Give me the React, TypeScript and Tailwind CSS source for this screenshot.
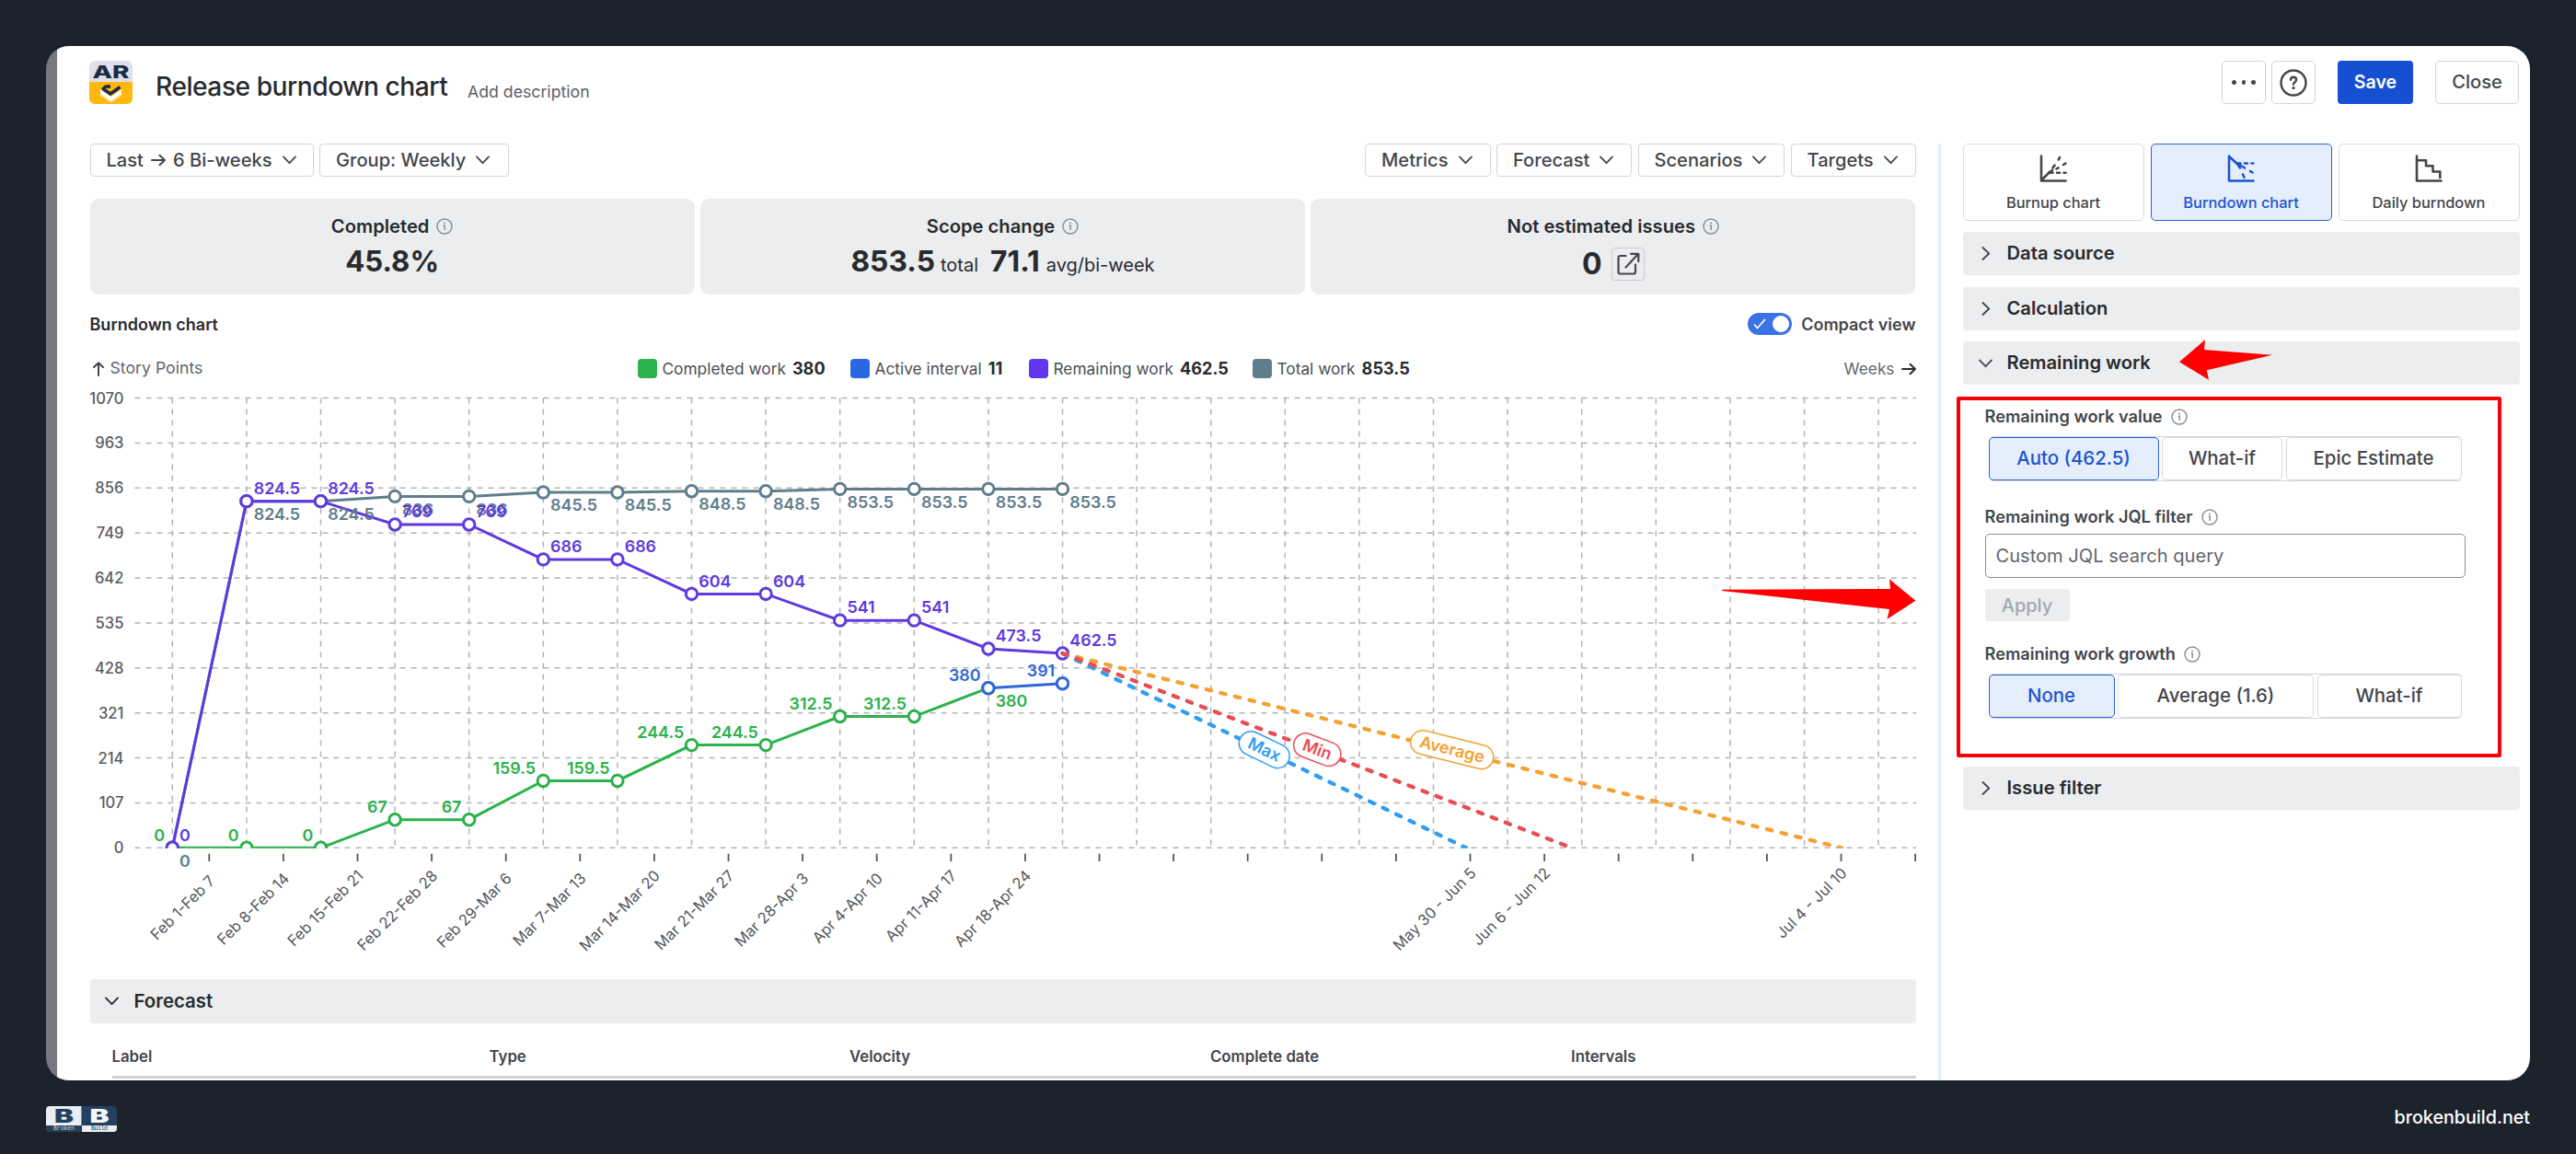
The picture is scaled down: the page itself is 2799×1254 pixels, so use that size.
import type { ReactNode } from 'react';

type Side = 'left' | 'right' | 'below-right';

interface Series {
  color: string;
  start: number;
  values: number[];
  side: Side;
}

const PLOT = { left: 187.3, step: 80.6, top: 432.5, bottom: 921.3, right: 2082, max: 1070 };

const px = (i: number) => PLOT.left + PLOT.step * i;
const py = (v: number) => PLOT.bottom - (v / PLOT.max) * (PLOT.bottom - PLOT.top);

const yTicks = [1070, 963, 856, 749, 642, 535, 428, 321, 214, 107, 0];

const weeks: { index: number; label: string }[] = [
  { index: 0, label: 'Feb 1-Feb 7' },
  { index: 1, label: 'Feb 8-Feb 14' },
  { index: 2, label: 'Feb 15-Feb 21' },
  { index: 3, label: 'Feb 22-Feb 28' },
  { index: 4, label: 'Feb 29-Mar 6' },
  { index: 5, label: 'Mar 7-Mar 13' },
  { index: 6, label: 'Mar 14-Mar 20' },
  { index: 7, label: 'Mar 21-Mar 27' },
  { index: 8, label: 'Mar 28-Apr 3' },
  { index: 9, label: 'Apr 4-Apr 10' },
  { index: 10, label: 'Apr 11-Apr 17' },
  { index: 11, label: 'Apr 18-Apr 24' },
  { index: 17, label: 'May 30 - Jun 5' },
  { index: 18, label: 'Jun 6 - Jun 12' },
  { index: 22, label: 'Jul 4 - Jul 10' },
];

const series: Series[] = [
  {
    color: '#607d8b',
    start: 0,
    values: [0, 824.5, 824.5, 836, 836, 845.5, 845.5, 848.5, 848.5, 853.5, 853.5, 853.5, 853.5],
    side: 'below-right',
  },
  {
    color: '#2bb24c',
    start: 0,
    values: [0, 0, 0, 67, 67, 159.5, 159.5, 244.5, 244.5, 312.5, 312.5, 380],
    side: 'left',
  },
  {
    color: '#5e3adf',
    start: 0,
    values: [0, 824.5, 824.5, 769, 769, 686, 686, 604, 604, 541, 541, 473.5, 462.5],
    side: 'right',
  },
  { color: '#2f68d8', start: 11, values: [380, 391], side: 'left' },
];

const forecasts = [
  { label: 'Average', color: '#f5a132', endX: 2001, width: 92 },
  { label: 'Max', color: '#2f9df4', endX: 1593, width: 58 },
  { label: 'Min', color: '#e84d54', endX: 1708, width: 53 },
];

const legend = [
  { label: 'Completed work', value: '380', swatch: 'bg-[#2bb24c]', width: 'w-[231px]' },
  { label: 'Active interval', value: '11', swatch: 'bg-[#2b67e0]', width: 'w-[194px]' },
  { label: 'Remaining work', value: '462.5', swatch: 'bg-[#6236ea]', width: 'w-[243px]' },
  { label: 'Total work', value: '853.5', swatch: 'bg-[#607d8b]', width: 'w-[173px]' },
];

function ChevronDown() {
  return (
    <svg className="shrink-0" width="15" height="10" viewBox="0 0 15 10" fill="none" stroke="currentColor" strokeWidth="1.8" strokeLinecap="round" strokeLinejoin="round">
      <path d="M1 1.4l6.5 6.8L14 1.4" />
    </svg>
  );
}

function ChevronRight() {
  return (
    <svg className="shrink-0" width="10" height="15" viewBox="0 0 10 15" fill="none" stroke="currentColor" strokeWidth="1.8" strokeLinecap="round" strokeLinejoin="round">
      <path d="M1.4 1l6.8 6.5L1.4 14" />
    </svg>
  );
}

function ArrowRight() {
  return (
    <svg className="shrink-0" width="16" height="14" viewBox="0 0 16 14" fill="none" stroke="currentColor" strokeWidth="2" strokeLinecap="round" strokeLinejoin="round">
      <path d="M1 7h14M9.5 1.8L15 7l-5.5 5.2" />
    </svg>
  );
}

function InfoIcon() {
  return (
    <svg className="shrink-0 text-[#8c8f97]" width="18" height="18" viewBox="0 0 18 18" fill="none" stroke="currentColor" strokeWidth="1.5">
      <circle cx="9" cy="9" r="8" />
      <path d="M7.6 8.2H9.2V13" />
      <circle cx="9" cy="5.5" r="1" fill="currentColor" stroke="none" />
    </svg>
  );
}

function AppLogo() {
  return (
    <svg width="47" height="47" viewBox="0 0 47 47">
      <defs>
        <clipPath id="logo">
          <rect width="47" height="47" rx="6" />
        </clipPath>
      </defs>
      <g clipPath="url(#logo)">
        <rect width="47" height="23" fill="#dfe1e8" />
        <rect y="23" width="47" height="24" fill="#ffb70d" />
        <text x="3.5" y="19" fontFamily="Inter, sans-serif" fontWeight="800" fontSize="19" fill="#1d2b45" textLength="40" lengthAdjust="spacingAndGlyphs">AR</text>
        <path d="M12 31l11.5 8 11.5-8v5L23.500 44 12 36z" fill="#fff" />
        <path d="M12 37l11.500 7.500 11.500-7.500" fill="none" stroke="#ffe2a0" strokeWidth="1.500" />
        <path d="M23 28h-5l-3 2.500 8 5.500 10.500-7.500" fill="none" stroke="#1d2b45" strokeWidth="3.400" strokeLinejoin="round" />
      </g>
    </svg>
  );
}

function BrandLogo() {
  return (
    <svg width="77" height="28" viewBox="0 0 77 28">
      <defs>
        <clipPath id="brand">
          <rect width="77" height="28" rx="4" />
        </clipPath>
      </defs>
      <g clipPath="url(#brand)">
        <rect width="38.5" height="21" fill="#e9edf4" />
        <rect x="39" width="38.5" height="21" fill="#24405f" />
        <rect y="21" width="38.5" height="7" fill="#24405f" />
        <rect x="39" y="21" width="38.5" height="7" fill="#e9edf4" />
        <g fontFamily="Inter, sans-serif" fontWeight="900" fontSize="20">
          <text x="9" y="18" fill="#24405f" textLength="21" lengthAdjust="spacingAndGlyphs">B</text>
          <text x="47.5" y="18" fill="#f4f6f9" textLength="21" lengthAdjust="spacingAndGlyphs">B</text>
        </g>
        <g fontFamily="Liberation Mono, monospace" fontSize="6.5">
          <text x="8" y="26.3" fill="#cdd6e2" textLength="23">Broken</text>
          <text x="49" y="26.3" fill="#24405f" textLength="18">Build</text>
        </g>
      </g>
    </svg>
  );
}

function Dropdown({ children, width }: { children: ReactNode; width: string }) {
  return (
    <button className={`flex h-9 items-center gap-[11px] whitespace-nowrap rounded-[4px] border border-[#d3d5d9] pl-[17px] text-[20.1px] font-medium text-[#44464b] ${width}`}>
      {children}
      <ChevronDown />
    </button>
  );
}

function Stat({ title, children }: { title: string; children: ReactNode }) {
  return (
    <div className="flex h-[104px] flex-1 flex-col items-center rounded-[9px] bg-[#ebedee] pt-[17px] text-[#292a2e]">
      <div className="flex h-[26px] items-center gap-[8px] text-[20.2px] font-semibold">
        {title}
        <InfoIcon />
      </div>
      {children}
    </div>
  );
}

function Section({ title, open }: { title: string; open?: boolean }) {
  return (
    <div className="flex h-[47px] items-center rounded-[4px] bg-[#ebedee] pl-[16px] text-[20.2px] font-semibold text-[#292a2e]">
      <div className="flex w-[32px] justify-start pl-[1px] text-[#44464b]">
        {open ? <ChevronDown /> : <span className="pl-[3px]"><ChevronRight /></span>}
      </div>
      {title}
    </div>
  );
}

function FieldLabel({ children }: { children: ReactNode }) {
  return (
    <div className="flex h-5 items-center gap-[9px] text-[18.2px] font-semibold text-[#44464b]">
      {children}
      <InfoIcon />
    </div>
  );
}

function Segmented({ options }: { options: { label: string; width: string; active?: boolean }[] }) {
  return (
    <div className="ml-[4px] mt-[11px] flex h-[49px] w-[514px] justify-between rounded-[5px] border-y border-[#d3d5d9] text-[20.4px] font-medium">
      {options.map((o) => (
        <div
          key={o.label}
          className={`flex items-center justify-center rounded-[5px] border ${o.width} ${
            o.active ? 'border-[#2c63d6] bg-[#e4eefd] text-[#1d54cf]' : 'border-[#d9dbde] bg-white text-[#44464b]'
          }`}
        >
          {o.label}
        </div>
      ))}
    </div>
  );
}

function TypeTab({ label, active, children }: { label: string; active?: boolean; children: ReactNode }) {
  return (
    <div
      className={`flex h-[84px] flex-1 flex-col items-center rounded-[5px] border pt-[11px] text-[16.4px] font-medium ${
        active ? 'border-[#2c63d6] bg-[#e4eefd] text-[#1d54cf]' : 'border-[#d9dbde] text-[#44464b]'
      }`}
    >
      <svg width="30" height="30" viewBox="0 0 30 30" fill="none" stroke="currentColor" strokeWidth="2.6" strokeLinecap="round" strokeLinejoin="round">
        {children}
      </svg>
      <span className="mt-[10px] leading-[24px]">{label}</span>
    </div>
  );
}

function SeriesLine({ s }: { s: Series }) {
  const points = s.values.map((v, i) => ({ x: px(s.start + i), y: py(v) }));
  return (
    <g stroke={s.color} strokeWidth="3" fill="none">
      <polyline points={points.map((p) => `${p.x},${p.y}`).join(' ')} />
      {points.map((p, i) => (
        <circle key={i} cx={p.x} cy={p.y} r="6.2" fill="#fff" />
      ))}
    </g>
  );
}

function SeriesLabels({ s }: { s: Series }) {
  return (
    <g fill={s.color} fontSize="17.9" fontWeight="600">
      {s.values.map((v, i) => {
        // the last completed point is shared with the active interval, so its label drops below
        const side = s.side === 'left' && s.start === 0 && i === 11 ? 'below-right' : s.side;
        const x = px(s.start + i) + (side === 'left' ? -8.3 : 7.8);
        const y = py(v) + (side === 'below-right' ? 20.3 : -7.7);
        return (
          <text key={i} x={x} y={y} textAnchor={side === 'left' ? 'end' : 'start'}>
            {v}
          </text>
        );
      })}
    </g>
  );
}

function BurndownChart() {
  const originX = px(12);
  const originY = py(462.5);

  return (
    <svg className="mt-[9px] block" width="1984" height="634" viewBox="98 420 1984 634" fontFamily="Inter, sans-serif">
      <defs>
        <clipPath id="plot">
          <rect x="140" y="425" width="1942" height={PLOT.bottom - 425 + 0.5} />
        </clipPath>
      </defs>

      <g stroke="#b1b3b6" strokeWidth="1.5" strokeDasharray="6 6">
        {yTicks.map((t) => (
          <line key={t} x1="146.5" x2={PLOT.right} y1={py(t)} y2={py(t)} />
        ))}
        {Array.from({ length: 24 }, (_, i) => (
          <line key={i} x1={px(i)} x2={px(i)} y1={PLOT.top} y2={PLOT.bottom} />
        ))}
      </g>

      <g fill="#5a5d63" fontSize="16.6" fontWeight="500" textAnchor="end">
        {yTicks.map((t) => (
          <text key={t} x="134.5" y={py(t) + 6}>{t}</text>
        ))}
      </g>

      <g stroke="#55575c" strokeWidth="1.8">
        {Array.from({ length: 24 }, (_, i) => (
          <line key={i} x1={px(i + 0.5) - 0.3} x2={px(i + 0.5) - 0.3} y1="927.7" y2="936" />
        ))}
      </g>

      <g fill="#55575c" fontSize="16.5" textAnchor="end">
        {weeks.map((w) => (
          <text key={w.label} transform={`translate(${px(w.index + 0.5) + 7} ${989.8 - 2.85 * w.label.length}) rotate(-45)`}>
            {w.label}
          </text>
        ))}
      </g>

      <g clipPath="url(#plot)">
        {series.map((s, i) => <SeriesLine key={i} s={s} />)}
        {forecasts.map((f) => (
          <line
            key={f.label}
            x1={originX}
            y1={originY}
            x2={f.endX}
            y2={PLOT.bottom}
            stroke={f.color}
            strokeWidth="4.3"
            strokeLinecap="round"
            strokeDasharray="5.5 10.6"
          />
        ))}
      </g>

      {forecasts.map((f) => {
        const angle = (Math.atan2(PLOT.bottom - originY, f.endX - originX) * 180) / Math.PI;
        return (
          <g key={f.label} transform={`translate(${(originX + f.endX) / 2} ${(originY + PLOT.bottom) / 2 - 1}) rotate(${angle})`}>
            <rect x={-f.width / 2} y="-13" width={f.width} height="26" rx="13" fill="#fff" stroke={f.color} strokeWidth="1.5" />
            <text y="6" fill={f.color} fontSize="18" fontWeight="600" textAnchor="middle">{f.label}</text>
          </g>
        );
      })}

      {series.map((s, i) => <SeriesLabels key={i} s={s} />)}
    </svg>
  );
}

function SettingsPanel() {
  return (
    <aside className="w-[605px]">
      <div className="flex gap-[7px]">
        <TypeTab label="Burnup chart">
          <path d="M2 1.5V28.5H28.5M2 28L11 19" />
          <path d="M14.5 14.5L16.5 11.5M20.8 5.5L22 3M18.5 15.5L20.5 14.3M26 11L28.3 9.6M11.5 19.8H14.5M19 19.8H22M26.5 19.8H28.5M11 19l3-2" />
        </TypeTab>
        <TypeTab label="Burndown chart" active>
          <path d="M2 1.5V28.5H28.5M2 2L11 10" />
          <path d="M11.5 9.5H14.5M19 9.5H22M26.5 9.5H28.3M16 12.5L19 14.5M25 18L27.5 19.5M11 10L14 14.5M17 21.5L18.500 24.800M11 10L14 11.500" />
        </TypeTab>
        <TypeTab label="Daily burndown">
          <path d="M2 1.5V28.5H28.5" />
          <path d="M2 6.2H12V12.2H19.5V18.5H27.3V25" />
        </TypeTab>
      </div>

      <div className="mt-[12px] flex flex-col gap-[12.5px]">
        <Section title="Data source" />
        <Section title="Calculation" />
        <Section title="Remaining work" open />
      </div>

      <div className="mt-[25px] w-[546px] pl-[24px]">
        <FieldLabel>Remaining work value</FieldLabel>
        <Segmented
          options={[
            { label: 'Auto (462.5)', width: 'w-[185px]', active: true },
            { label: 'What-if', width: 'w-[131px]' },
            { label: 'Epic Estimate', width: 'w-[191px]' },
          ]}
        />
        <div className="mt-[29px]">
          <FieldLabel>Remaining work JQL filter</FieldLabel>
        </div>
        <input
          className="mt-[8px] block h-[48px] w-[522px] rounded-[5px] border border-[#8c8f97] pl-[11px] text-[20.1px] placeholder:text-[#63666c]"
          placeholder="Custom JQL search query"
        />
        <button className="mt-[12px] flex h-[35px] w-[92px] items-center justify-center rounded-[4px] bg-[#ebedee] text-[20px] font-medium text-[#a5a7ab]">Apply</button>
        <div className="mt-[26px]">
          <FieldLabel>Remaining work growth</FieldLabel>
        </div>
        <Segmented
          options={[
            { label: 'None', width: 'w-[137px]', active: true },
            { label: 'Average (1.6)', width: 'w-[213px]' },
            { label: 'What-if', width: 'w-[157px]' },
          ]}
        />
      </div>

      <div className="mt-[52px]">
        <Section title="Issue filter" />
      </div>
    </aside>
  );
}

export default function App() {
  return (
    <div className="relative h-[1254px] w-[2799px] overflow-hidden bg-[#1c232c] px-[50px] pt-[50px] font-[Inter,sans-serif]">
      <div className="h-[1124px] w-[2699px] overflow-hidden rounded-[25px] bg-[#787681] pl-[12px]">
        <div className="h-full bg-white">
          <header className="flex h-[106px] items-start pl-[35px] pr-[12px] pt-[16px]">
            <AppLogo />
            <h1 className="ml-[25px] mt-[8px] w-[317px] whitespace-nowrap text-[28.2px] font-medium leading-[40px] tracking-[-0.5px] text-[#292a2e]">Release burndown chart</h1>
            <span className="ml-[22px] mt-[19px] text-[17.7px] leading-[30px] text-[#5d6067]">Add description</span>
            <div className="ml-auto flex h-[47px] text-[20.1px] font-medium text-[#44464b]">
              <button className="flex w-[48px] items-center justify-center gap-[6px] rounded-[5px] border border-[#d3d5d9]">
                <i className="size-[4.5px] rounded-full bg-[#44464b]" />
                <i className="size-[4.5px] rounded-full bg-[#44464b]" />
                <i className="size-[4.5px] rounded-full bg-[#44464b]" />
              </button>
              <button className="ml-[6px] flex w-[48px] items-center justify-center rounded-[5px] border border-[#d3d5d9]">
                <svg width="30" height="30" viewBox="0 0 30 30" fill="none" stroke="currentColor" strokeWidth="2.4" strokeLinecap="round">
                  <circle cx="15" cy="15" r="13.5" />
                  <path d="M12 11.8c0-1.8 1.3-3 3-3s3.1 1.2 3.1 2.9c0 2.4-3.1 2.5-3.1 5" />
                  <circle cx="15" cy="20.6" r="1.7" fill="currentColor" stroke="none" />
                </svg>
              </button>
              <button className="ml-[24px] w-[82px] rounded-[4px] bg-[#1550d2] text-[19.6px] font-semibold text-white">Save</button>
              <button className="ml-[24px] w-[91px] rounded-[5px] border border-[#d3d5d9]">Close</button>
            </div>
          </header>

          <div className="flex pl-[35.5px]">
            <main className="w-[1984px]">
              <div className="flex justify-between">
                <div className="flex gap-[6.5px]">
                  <Dropdown width="w-[243px]">
                    <span className="flex items-center gap-[8px]">Last <ArrowRight /> 6 Bi-weeks</span>
                  </Dropdown>
                  <Dropdown width="w-[206px]">Group: Weekly</Dropdown>
                </div>
                <div className="flex gap-[6.5px]">
                  <Dropdown width="w-[136.5px]">Metrics</Dropdown>
                  <Dropdown width="w-[147px]">Forecast</Dropdown>
                  <Dropdown width="w-[159.5px]">Scenarios</Dropdown>
                  <Dropdown width="w-[136px]">Targets</Dropdown>
                </div>
              </div>

              <div className="mt-[24px] flex gap-[6px]">
                <Stat title="Completed">
                  <div className="mt-[7px] text-[31.2px] font-bold leading-[36px]">45.8%</div>
                </Stat>
                <Stat title="Scope change">
                  <div className="mt-[7px] flex items-baseline leading-[36px]">
                    <b className="text-[31.8px]">853.5</b>
                    <span className="ml-[6px] text-[20px]">total</span>
                    <b className="ml-[13px] text-[31.8px]">71.1</b>
                    <span className="ml-[7px] text-[20px]">avg/bi-week</span>
                  </div>
                </Stat>
                <Stat title="Not estimated issues">
                  <div className="mt-[10px] flex h-[36px] items-center gap-[10px]">
                    <b className="text-[32px] leading-[36px]">0</b>
                    <span className="flex size-[36px] items-center justify-center rounded-[4px] border border-[#c9cbcf] text-[#44464b]">
                      <svg width="26" height="26" viewBox="0 0 26 26" fill="none" stroke="currentColor" strokeWidth="2.2" strokeLinecap="round" strokeLinejoin="round">
                        <path d="M10.5 4H4.500a2 2 0 0 0-2 2v15.500a2 2 0 0 0 2 2H19a2 2 0 0 0 2-2V13.500M16 1.800h8.300v8.300M24 2L10.500 16.500" />
                      </svg>
                    </span>
                  </div>
                </Stat>
              </div>

              <div className="mt-[20px] flex h-6 items-center justify-between text-[18px] font-semibold">
                <h2 className="text-[#292a2e]">Burndown chart</h2>
                <div className="flex items-center gap-[10px] text-[#44464b]">
                  <span className="flex h-6 w-12 items-center justify-between rounded-full bg-[#3a72e8] pl-[6px] pr-[3px]">
                    <svg width="14" height="12" viewBox="0 0 14 12" fill="none" stroke="#fff" strokeWidth="1.8" strokeLinecap="round" strokeLinejoin="round">
                      <path d="M1.5 7l3 3.5L12.5 1.5" />
                    </svg>
                    <i className="size-[18px] rounded-full bg-white" />
                  </span>
                  Compact view
                </div>
              </div>

              <div className="mt-[26px] flex h-[21px] items-center text-[17.3px] text-[#4c4e54]">
                <div className="flex w-[595px] items-center gap-[7px] pl-[3px] text-[17.7px] text-[#63666c]">
                  <svg width="12" height="16" viewBox="0 0 12 16" fill="none" stroke="#44464b" strokeWidth="2" strokeLinecap="round" strokeLinejoin="round">
                    <path d="M6 15V1.5M1 6l5-4.8L11 6" />
                  </svg>
                  Story Points
                </div>
                {legend.map((l) => (
                  <div key={l.label} className={`flex items-center whitespace-nowrap ${l.width}`}>
                    <i className={`mr-[6px] size-[21px] shrink-0 rounded-[4px] ${l.swatch}`} />
                    {l.label}
                    <b className="ml-[7px] text-[18.1px] text-[#292a2e]">{l.value}</b>
                  </div>
                ))}
                <div className="ml-auto flex items-center gap-[7px] text-[#63666c]">
                  Weeks
                  <span className="text-[#292a2e]"><ArrowRight /></span>
                </div>
              </div>

              <BurndownChart />

              <div className="mt-[10px] flex h-12 items-center gap-[17px] rounded-[4px] bg-[#ebedee] pl-[16px] text-[20.4px] font-semibold text-[#292a2e]">
                <ChevronDown />
                Forecast
              </div>
              <div className="ml-[24px] mt-[20px] flex h-[40px] items-center border-b-3 border-[#cfd1d4] pb-[4px] text-[16.8px] font-semibold text-[#44464b]">
                <span className="w-[410px]">Label</span>
                <span className="w-[391.5px]">Type</span>
                <span className="w-[392px]">Velocity</span>
                <span className="w-[392px]">Complete date</span>
                <span>Intervals</span>
              </div>
            </main>

            <div className="ml-[24px] mr-[24px] h-[1018px] w-[3px] bg-[#e3eefd]" />
            <SettingsPanel />
          </div>
        </div>
      </div>

      <footer className="mt-[28px] flex h-[28px] items-center justify-between">
        <BrandLogo />
        <span className="pb-[2px] text-[19.7px] font-medium text-white">brokenbuild.net</span>
      </footer>

      {/* red callouts on top of the page */}
      <div className="absolute left-[2126px] top-[431px] h-[392px] w-[592px] rounded-[2px] border-4 border-[#f80008]" />
      <svg className="absolute left-[2366px] top-[367px]" width="106" height="48" viewBox="2366 367 106 48">
        <path d="M2368 393.3L2396 369.3L2395 380L2469 385.7L2397.8 402.3L2400 412.7Z" fill="#fe0000" />
      </svg>
      <svg className="absolute left-[1868px] top-[627px]" width="216" height="48" viewBox="1868 627 216 48">
        <path d="M1871 640.700L1871 642L2053 662L2050.500 672.700L2081.400 652.700L2053 629.300L2054 640Z" fill="#fe0000" />
      </svg>
    </div>
  );
}
